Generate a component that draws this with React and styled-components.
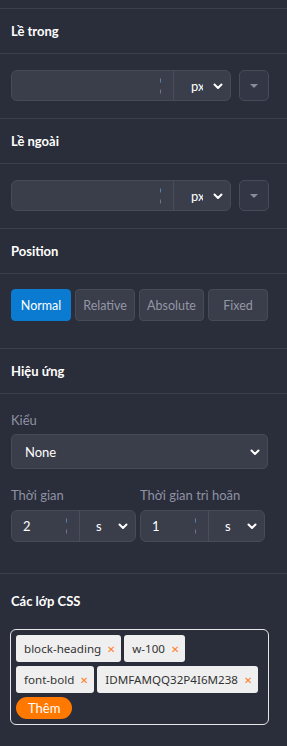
import React from "react"
import styled, { createGlobalStyle } from "styled-components"

const GlobalStyle = createGlobalStyle`
  html, body {
    margin: 0;
    padding: 0;
    background: #2a2d3a;
  }
  body {
    font-family: Lato, "Liberation Sans", Arial, sans-serif;
    color: #fff;
  }
`

const Panel = styled.div`
  width: 287px;
  padding-top: 8px;
  background: #2a2d3a;
`

const Section = styled.section`
  border-top: 1px solid #3c404d;
`

const Header = styled.div`
  height: ${(p) => p.$h || 44}px;
  display: flex;
  align-items: center;
  padding: 0 11px;
  font-size: 13px;
  font-weight: 700;
  color: #fff;
  border-bottom: ${(p) => (p.$noLine ? "none" : "1px solid #3c404d")};
`

const Body = styled.div`
  padding: ${(p) => p.$pad || "16px 11px 17px"};
`

const Row = styled.div`
  display: flex;
  align-items: center;
  gap: ${(p) => p.$gap || 8}px;
`

const Group = styled.div`
  display: flex;
  width: ${(p) => p.$w}px;
  height: ${(p) => p.$h || 31}px;
  box-sizing: border-box;
  border: 1px solid #474a57;
  border-radius: 6px;
  background: #3a3d4a;
  overflow: hidden;
`

const NumberBox = styled.div`
  flex: 1;
  position: relative;
  display: flex;
  align-items: center;
  padding-left: 11px;
  font-size: 13px;
  color: #fff;
  border-right: 1px solid #4a4d5a;
`

const Spinner = styled.span`
  position: absolute;
  right: 12px;
  top: 50%;
  transform: translateY(-50%);
  display: flex;
  flex-direction: column;
  gap: 7px;
  &::before,
  &::after {
    content: "";
    width: 1px;
    height: 4px;
    background: #5d7fa8;
  }
  &::after {
    background: #7a6e8e;
  }
`

const UnitBox = styled.div`
  width: ${(p) => p.$w}px;
  display: flex;
  align-items: center;
  justify-content: space-between;
  padding: 0 6px 0 ${(p) => p.$pl || 16}px;
  box-sizing: border-box;
  font-size: 13px;
  color: #fff;
`

const UnitText = styled.span`
  width: ${(p) => p.$clip || 14}px;
  overflow: hidden;
  white-space: nowrap;
`

const Chevron = () => (
  <svg width="12" height="12" viewBox="0 0 24 24" fill="none" stroke="#fff" strokeWidth="4" strokeLinecap="round" strokeLinejoin="round">
    <polyline points="5 9 12 16 19 9" />
  </svg>
)

const SmallBtn = styled.div`
  width: 30px;
  height: 31px;
  box-sizing: border-box;
  border: 1px solid #474a57;
  border-radius: 5px;
  background: #333644;
  display: flex;
  align-items: center;
  justify-content: center;
  &::after {
    content: "";
    border-left: 4px solid transparent;
    border-right: 4px solid transparent;
    border-top: 4px solid #8a8d99;
  }
`

const PosBtn = styled.div`
  flex: 1 1 0;
  height: 32px;
  box-sizing: border-box;
  padding: 0 7px;
  display: flex;
  align-items: center;
  justify-content: center;
  border-radius: 4px;
  font-size: 12.5px;
  border: 1px solid ${(p) => (p.$active ? "#0a7bd0" : "#474a57")};
  background: ${(p) => (p.$active ? "#0a7bd0" : "#3a3d4a")};
  color: ${(p) => (p.$active ? "#fff" : "#9497a6")};
`

const Label = styled.div`
  font-size: 13px;
  line-height: 16px;
  color: #8e92a4;
  margin-bottom: ${(p) => p.$mb || 8}px;
`

const Select = styled.div`
  height: 35px;
  box-sizing: border-box;
  border: 1px solid #474a57;
  border-radius: 5px;
  background: #3a3d4a;
  display: flex;
  align-items: center;
  justify-content: space-between;
  padding: 0 6px 0 13px;
  font-size: 13px;
  color: #fff;
`

const Field = styled.div`
  display: flex;
  flex-direction: column;
`

const TagBox = styled.div`
  border: 1px solid #e6e6e6;
  border-radius: 6px;
  padding: 5px;
  display: flex;
  flex-wrap: wrap;
  gap: 4px 3px;
`

const Tag = styled.span`
  height: 27px;
  display: inline-flex;
  align-items: center;
  gap: 6px;
  padding: 0 6px 0 8px;
  background: #efefef;
  border-radius: 3px;
  font-family: "Noto Sans", "Open Sans", sans-serif;
  font-size: 11.6px;
  color: #333;
`

const Remove = styled.span`
  color: #ff7b1c;
  font-size: 10px;
`

const AddBtn = styled.span`
  height: 22px;
  display: inline-flex;
  align-items: center;
  padding: 0 12px;
  border-radius: 11px;
  background: #ff7800;
  color: #fff;
  font-size: 13px;
`

const SizeRow = () => (
  <Row>
    <Group $w={220}>
      <NumberBox>
        <Spinner />
      </NumberBox>
      <UnitBox $w={56} $pl={17}>
        <UnitText $clip={12}>px</UnitText>
        <Chevron />
      </UnitBox>
    </Group>
    <SmallBtn />
  </Row>
)

const TimeField = ({ label, value }) => (
  <Field>
    <Label $mb={7}>{label}</Label>
    <Group $w={125} $h={32}>
      <NumberBox>
        {value}
        <Spinner />
      </NumberBox>
      <UnitBox $w={55} $pl={16}>
        <UnitText $clip={10}>s</UnitText>
        <Chevron />
      </UnitBox>
    </Group>
  </Field>
)

const tags = ["block-heading", "w-100", "font-bold", "IDMFAMQQ32P4I6M238"]

const App = () => {
  return (
    <Panel>
      <GlobalStyle />
      <Section>
        <Header>Lề trong</Header>
        <Body>
          <SizeRow />
        </Body>
      </Section>
      <Section>
        <Header>Lề ngoài</Header>
        <Body>
          <SizeRow />
        </Body>
      </Section>
      <Section>
        <Header>Position</Header>
        <Body $pad="15px 19px 27px 11px">
          <Row $gap={4}>
            <PosBtn $active>Normal</PosBtn>
            <PosBtn>Relative</PosBtn>
            <PosBtn>Absolute</PosBtn>
            <PosBtn>Fixed</PosBtn>
          </Row>
        </Body>
      </Section>
      <Section>
        <Header>Hiệu ứng</Header>
        <Body $pad="18px 19px 31px 11px">
          <Label $mb={6}>Kiểu</Label>
          <Select>
            None
            <Chevron />
          </Select>
          <Row $gap={4} style={{ marginTop: 18 }}>
            <TimeField label="Thời gian" value="2" />
            <TimeField label="Thời gian trì hoãn" value="1" />
          </Row>
        </Body>
      </Section>
      <Section>
        <Header $noLine $h={54}>Các lớp CSS</Header>
        <Body $pad="1px 18px 20px 10px">
          <TagBox>
            {tags.map((t) => (
              <Tag key={t}>
                {t}
                <Remove>✕</Remove>
              </Tag>
            ))}
            <AddBtn>Thêm</AddBtn>
          </TagBox>
        </Body>
      </Section>
    </Panel>
  )
}

export default App
